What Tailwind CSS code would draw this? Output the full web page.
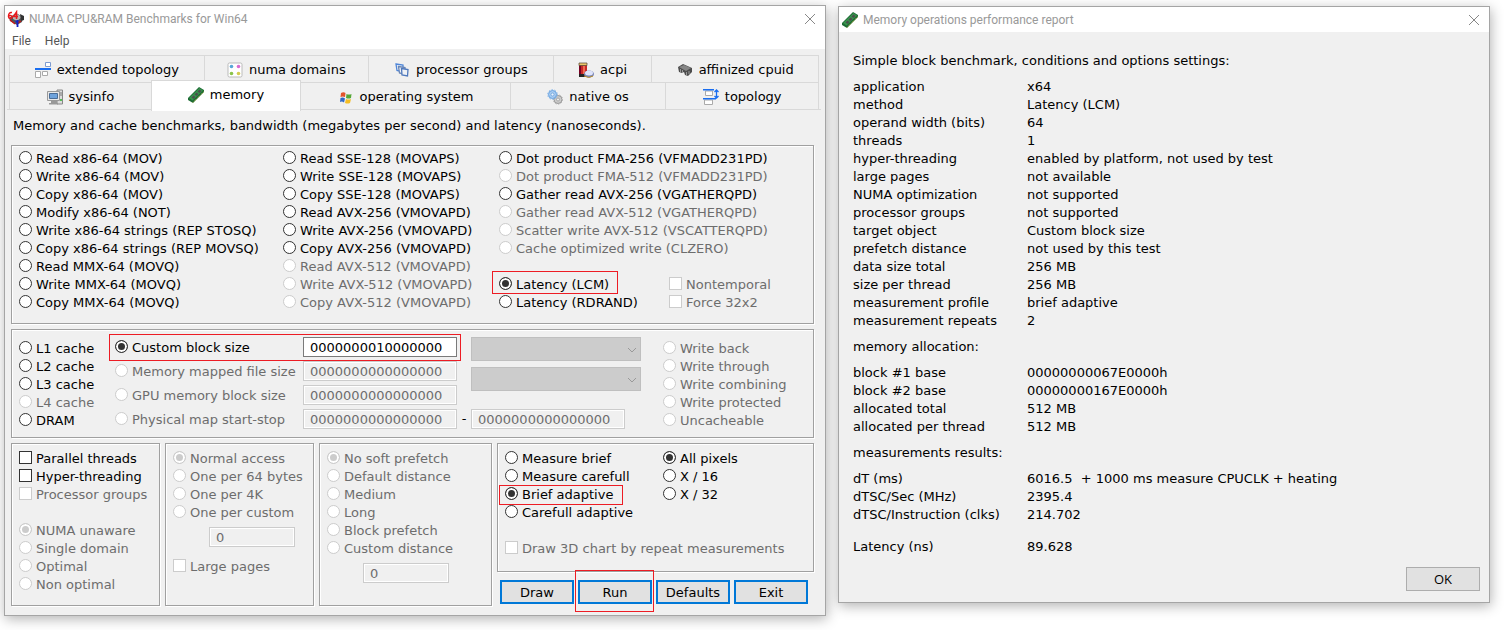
<!DOCTYPE html>
<html lang="en">
<head>
<meta charset="utf-8">
<title>NUMA CPU&amp;RAM Benchmarks for Win64</title>
<script src="https://cdn.jsdelivr.net/npm/@tailwindcss/browser@4"></script>
</head>
<body class="grid min-h-screen grid-cols-[minmax(0,822fr)_minmax(0,652fr)] items-start gap-3 bg-white pt-[5px] pr-3.5 pb-3.5 pl-1 font-['Verdana','DejaVu_Sans',sans-serif] text-[13px] leading-[18px] whitespace-nowrap text-black [&_label]:flex [&_label]:h-[18px] [&_label]:w-max [&_label]:items-start [&_label]:gap-1 [&_label]:leading-5 [&_label]:has-disabled:text-[#6d6d6d] [&_label>input]:mt-0.5 [&_[type=radio]]:size-[13px] [&_[type=radio]]:appearance-none [&_[type=radio]]:rounded-full [&_[type=radio]]:border [&_[type=radio]]:border-[#333] [&_[type=radio]]:bg-white [&_[type=radio]]:disabled:border-[#ccc] [&_[type=radio]]:checked:bg-[#333] [&_[type=radio]]:checked:shadow-[inset_0_0_0_2px_#fff] [&_[type=radio]]:checked:disabled:bg-[#ccc] [&_[type=checkbox]]:size-[13px] [&_[type=checkbox]]:appearance-none [&_[type=checkbox]]:border [&_[type=checkbox]]:border-[#333] [&_[type=checkbox]]:bg-white [&_[type=checkbox]]:disabled:border-[#ccc] [&_[type=text]]:h-5 [&_[type=text]]:border [&_[type=text]]:border-[#7a7a7a] [&_[type=text]]:bg-white [&_[type=text]]:px-1.5 [&_[type=text]]:disabled:border-[#ccc] [&_[type=text]]:disabled:bg-[#f0f0f0] [&_[type=text]]:disabled:text-[#6d6d6d] [&_[type=text]]:disabled:shadow-[inset_0_0_0_1px_#fff] [&_fieldset]:border [&_fieldset]:border-[#a0a0a0] [&_fieldset]:pl-[7px] [&_fieldset]:shadow-[1px_1px_0_#fff,inset_1px_1px_0_#fff]">

<main class="border border-[#a5a5a5] bg-[#f0f0f0] pb-[9px] shadow-[1px_3px_12px_rgba(0,0,0,0.3)]">
  <header class="bg-white font-['Segoe_UI',Roboto,'Open_Sans',sans-serif] text-xs">
    <div class="flex h-[25px] items-center gap-1 pl-0.5 text-[#999]">
      <svg class="size-[18px]" viewBox="0 0 18 18" aria-hidden="true"><path d="m2 8 7-5 7 4-1 5-5 3-7-4z" fill="#555"/><path d="m6 6 4-2 5 3-5 4-4-2z" fill="#b5b5b5"/><path d="m13 4 4 2v4l-3 1z" fill="#333"/><path d="M5 2.500C2.500 2 1.500 4 1.500 6.500S5 9 5 7 2 5 1.500 6.500M9.500 9V2L6.500 6.500H11" fill="none" stroke="#e8191c" stroke-width="1.500"/><path d="m3 10 5 4M11 13l3-2" stroke="#c11" stroke-width="1.200"/><path d="M10.500 10v7M8.500 11.500h3" stroke="#1420c8" stroke-width="1.800"/></svg>
      <h1>NUMA CPU&amp;RAM Benchmarks for Win64</h1>
      <button type="button" aria-label="Close" class="mr-[7px] ml-auto grid size-4 place-items-center"><svg class="size-3" viewBox="0 0 12 12" fill="none" stroke="#888"><path d="m1 1 10 10M11 1 1 11"/></svg></button>
    </div>
    <nav class="flex h-[18px] items-center gap-3.5 pt-0.5 pl-[7px] text-[#555]"><button type="button">File</button><button type="button">Help</button></nav>
  </header>

  <div class="pt-1.5 pr-1 pl-0.5">
    <div role="tablist" class="border-b border-[#d9d9d9] px-0.5">
      <div class="grid h-[27px] grid-cols-[195fr_165fr_185fr_99fr_166fr] divide-x divide-[#d9d9d9] border border-b-0 border-[#d9d9d9] *:flex *:items-center *:justify-center *:gap-1.5 *:pt-0.5">
        <button type="button" role="tab"><svg class="size-4" viewBox="0 0 16 16" fill="#fff" aria-hidden="true"><path d="M10.500.5h5v4h-5z" stroke="#7d9bd0"/><path d="M0 6h16v2H0z" fill="#1a6ef0"/><path d="M.5 9.500h5v6h-5zM7.500 9.500h5v4h-5z" stroke="#aaa"/></svg>extended topology</button>
        <button type="button" role="tab"><svg class="size-4" viewBox="0 0 16 16" aria-hidden="true"><rect x="1" y="1" width="14" height="14" rx="1.500" fill="#fff" stroke="#bbb"/><circle cx="4.500" cy="4.500" r="1.800" fill="#58a6d8"/><circle cx="11.500" cy="4.500" r="1.800" fill="#d96cd2"/><circle cx="4.500" cy="11.500" r="1.800" fill="#8bc34a"/><circle cx="11.500" cy="11.500" r="1.800" fill="#d4cc50"/></svg>numa domains</button>
        <button type="button" role="tab"><svg class="size-4" viewBox="0 0 16 16" fill="#eef1f6" stroke-width="1.300" aria-hidden="true"><path d="m2 2 7 1v7L3 8.500z" stroke="#4f86d8"/><path d="m4.500 4.500 6.500 1v7L5.500 11z" stroke="#6a86b4"/><path d="m7.500 6.500 6.500 1-.5 6.500-5.500-1z" stroke="#4f79bd"/></svg>processor groups</button>
        <button type="button" role="tab"><svg class="size-4" viewBox="0 0 16 16" aria-hidden="true"><path d="M1 1.500h8v13H1z" fill="#c62828"/><path d="M1 3h2v11H1z" fill="#702"/><path d="M5 4h2v9H5z" fill="#f26a50"/><path d="M1 1h8v2.500H1z" fill="#e9c66a" stroke="#543" stroke-width=".7"/><path d="M1 12h7v3H1z" fill="#222"/><ellipse cx="11" cy="12" rx="5" ry="3.600" fill="#7a86b8"/><ellipse cx="11" cy="11" rx="4" ry="2.500" fill="#dfe4fa"/><path d="M6 14q5 3 9 0" stroke="#b98c2a" fill="none"/></svg>acpi</button>
        <button type="button" role="tab"><svg class="size-4" viewBox="0 0 16 16" aria-hidden="true"><path d="m1 5 5-3 9 4v4l-4 4-3-1-1-3-2 1-3-1z" fill="#4d4d4d"/><path d="m2 5 5-2 7 3-5 3z" fill="#858585"/><path d="M3.500 7v3M5.500 8v3M9.500 10v3M12 9v3" stroke="#999"/></svg>affinized cpuid</button>
      </div>
      <div class="grid h-[27px] grid-cols-[141fr_151fr_209fr_157fr_152fr] border-x border-t border-[#d9d9d9] *:flex *:items-center *:justify-center *:gap-1.5 *:pt-0.5">
        <button type="button" role="tab"><svg class="size-4" viewBox="0 0 16 16" aria-hidden="true"><path d="M10 1h5.500v14H10z" fill="#ddd" stroke="#888"/><path d="M12 4h3M12 6h3" stroke="#777"/><path d="M13 10h2v2h-2z" fill="#5b5"/><path d="M.5 2.500h12v9H.5z" fill="#e8e8e8" stroke="#999"/><path d="M2.500 4.500h8v5h-8z" fill="#6fa3dc" stroke="#4a6d98"/><path d="M4 12h6v2H4zM2 14h9v1.500H2z" fill="#999"/></svg>sysinfo</button>
        <button type="button" role="tab" aria-selected="true" class="relative -mt-[3px] -mb-[2px] border border-b-0 border-[#d9d9d9] bg-white pb-1"><svg class="size-4" viewBox="0 0 16 16" aria-hidden="true"><path d="M0 11 11 0l5 3v2L5 16l-5-3z" fill="#1d6b35"/><path d="M1 11 11.500 1 15 3.500 4.500 13.500z" fill="#37934c"/><path d="m3.500 10.500 2-2 2 1.500-2 2zM6.500 7.500l2-2 2 1.500-2 2zM9.500 4.500l2-2 2 1.500-2 2z" fill="#4c504c"/><path d="M5 15.500 15.500 5" stroke="#d4c04a" stroke-dasharray="1 1"/></svg>memory</button>
        <button type="button" role="tab"><svg class="size-4" viewBox="0 0 16 16" aria-hidden="true"><path d="M3 4q2.500-1.500 4.500 0L7 8Q4.500 7 2.500 8z" fill="#e3542c"/><path d="M8.500 5q2.500 1 5 0L13 9q-2.500 1-5 0z" fill="#56a837"/><path d="M2.500 9Q5 8 7 9.500L6 13.500Q4 12 2 13z" fill="#3169c6"/><path d="M8 10q2.500 1 5 0l-1 4q-2.500 1-5 0z" fill="#f4bd25"/></svg>operating system</button>
        <button type="button" role="tab" class="border-x border-[#d9d9d9]"><svg class="size-4" viewBox="0 0 16 16" aria-hidden="true"><circle cx="11" cy="10.500" r="4" fill="#ccc" stroke="#999" stroke-width="1"/><circle cx="11" cy="10.500" r="4.600" fill="none" stroke="#aaa" stroke-dasharray="1.400 1.400"/><circle cx="11" cy="10.500" r="1.500" fill="#eee" stroke="#888" stroke-width=".6"/><circle cx="5.500" cy="5.500" r="4" fill="#a7cbf2" stroke="#6ba4e0" stroke-width="1"/><circle cx="5.500" cy="5.500" r="4.800" fill="none" stroke="#7fb2e8" stroke-dasharray="1.500 1.500"/><circle cx="5.500" cy="5.500" r="1.500" fill="#eaf4ff" stroke="#5590cf" stroke-width=".6"/></svg>native os</button>
        <button type="button" role="tab"><svg class="size-4" viewBox="0 0 16 16" fill="#fff" aria-hidden="true"><path d="M2.500 2h7v4.500h-7zM1.500 11h8v4.500h-8z" stroke="#aaa"/><path d="M0 0h11v1.500H0zM0 9h13v1.500H0z" fill="#1a6ef0"/><path d="M13.500 1v8M11.500 3l2-2 2 2M11.500 7l2 2 2-2" stroke="#1a6ef0" stroke-width="1.300" fill="none"/></svg>topology</button>
      </div>
    </div>
    <p class="flex h-[35px] items-center pb-1 pl-1.5">Memory and cache benchmarks, bandwidth (megabytes per second) and latency (nanoseconds).</p>
  </div>

  <div class="grid gap-[5px] pr-[11px] pl-1.5">
    <fieldset class="grid grid-cols-[minmax(0,264fr)_minmax(0,216fr)_minmax(0,314fr)] pt-[3px] pb-3" aria-label="Operation">
      <div>
        <label><input type="radio" name="op">Read x86-64 (MOV)</label>
        <label><input type="radio" name="op">Write x86-64 (MOV)</label>
        <label><input type="radio" name="op">Copy x86-64 (MOV)</label>
        <label><input type="radio" name="op">Modify x86-64 (NOT)</label>
        <label><input type="radio" name="op">Write x86-64 strings (REP STOSQ)</label>
        <label><input type="radio" name="op">Copy x86-64 strings (REP MOVSQ)</label>
        <label><input type="radio" name="op">Read MMX-64 (MOVQ)</label>
        <label><input type="radio" name="op">Write MMX-64 (MOVQ)</label>
        <label><input type="radio" name="op">Copy MMX-64 (MOVQ)</label>
      </div>
      <div>
        <label><input type="radio" name="op">Read SSE-128 (MOVAPS)</label>
        <label><input type="radio" name="op">Write SSE-128 (MOVAPS)</label>
        <label><input type="radio" name="op">Copy SSE-128 (MOVAPS)</label>
        <label><input type="radio" name="op">Read AVX-256 (VMOVAPD)</label>
        <label><input type="radio" name="op">Write AVX-256 (VMOVAPD)</label>
        <label><input type="radio" name="op">Copy AVX-256 (VMOVAPD)</label>
        <label><input type="radio" name="op" disabled>Read AVX-512 (VMOVAPD)</label>
        <label><input type="radio" name="op" disabled>Write AVX-512 (VMOVAPD)</label>
        <label><input type="radio" name="op" disabled>Copy AVX-512 (VMOVAPD)</label>
      </div>
      <div>
        <label><input type="radio" name="op">Dot product FMA-256 (VFMADD231PD)</label>
        <label><input type="radio" name="op" disabled>Dot product FMA-512 (VFMADD231PD)</label>
        <label><input type="radio" name="op">Gather read AVX-256 (VGATHERQPD)</label>
        <label><input type="radio" name="op" disabled>Gather read AVX-512 (VGATHERQPD)</label>
        <label><input type="radio" name="op" disabled>Scatter write AVX-512 (VSCATTERQPD)</label>
        <label><input type="radio" name="op" disabled>Cache optimized write (CLZERO)</label>
        <div class="mt-[18px] grid grid-cols-[minmax(0,170fr)_minmax(0,144fr)]">
          <label class="relative"><input type="radio" name="op" checked>Latency (LCM)<span class="absolute -top-1 -right-[9px] -left-[7px] h-[23px] border border-[#ed1c24]"></span></label>
          <label><input type="checkbox" disabled>Nontemporal</label>
          <label><input type="radio" name="op">Latency (RDRAND)</label>
          <label><input type="checkbox" disabled>Force 32x2</label>
        </div>
      </div>
    </fieldset>

    <fieldset class="grid grid-cols-[minmax(0,96fr)_minmax(0,356fr)_minmax(0,192fr)_minmax(0,150fr)] pt-[7px] pb-2" aria-label="Object">
      <div class="pt-0.5">
        <label><input type="radio" name="object">L1 cache</label>
        <label><input type="radio" name="object">L2 cache</label>
        <label><input type="radio" name="object">L3 cache</label>
        <label><input type="radio" name="object" disabled>L4 cache</label>
        <label><input type="radio" name="object" >DRAM</label>
      </div>
      <div class="relative grid grid-cols-[minmax(0,188fr)_minmax(0,154fr)_14px] items-center gap-y-1">
        <label><input type="radio" name="object" checked>Custom block size</label>
        <input type="text" aria-label="Custom block size" value="0000000010000000"><span></span>
        <label><input type="radio" name="object" disabled>Memory mapped file size</label>
        <input type="text" aria-label="Memory mapped file size" value="0000000000000000" disabled><span></span>
        <label><input type="radio" name="object" disabled>GPU memory block size</label>
        <input type="text" aria-label="GPU memory block size" value="0000000000000000" disabled><span></span>
        <label><input type="radio" name="object" disabled>Physical map start-stop</label>
        <input type="text" aria-label="Physical map start" value="0000000000000000" disabled><span class="text-center">-</span>
        <span class="pointer-events-none absolute -top-[3px] right-2.5 -left-1.5 h-[27px] border border-[#ed1c24]"></span>
      </div>
      <div class="flex flex-col gap-1.5 pr-[22px]">
        <div class="relative"><select disabled aria-label="Mapped file" class="block h-6 w-full appearance-none border border-[#bfbfbf] bg-[#ccc]"></select><svg class="pointer-events-none absolute top-2 right-1 size-2.5" viewBox="0 0 10 10" fill="none" stroke="#999"><path d="m1 3 4 4 4-4"/></svg></div>
        <div class="relative"><select disabled aria-label="GPU device" class="block h-6 w-full appearance-none border border-[#bfbfbf] bg-[#ccc]"></select><svg class="pointer-events-none absolute top-2 right-1 size-2.5" viewBox="0 0 10 10" fill="none" stroke="#999"><path d="m1 3 4 4 4-4"/></svg></div>
        <input type="text" aria-label="Physical map stop" value="0000000000000000" disabled class="mt-3 mr-4">
      </div>
      <div class="pt-0.5">
        <label><input type="radio" name="caching" disabled>Write back</label>
        <label><input type="radio" name="caching" disabled>Write through</label>
        <label><input type="radio" name="caching" disabled>Write combining</label>
        <label><input type="radio" name="caching" disabled>Write protected</label>
        <label><input type="radio" name="caching" disabled>Uncacheable</label>
      </div>
    </fieldset>

    <div class="grid grid-cols-[minmax(0,149fr)_minmax(0,149fr)_minmax(0,173fr)_minmax(0,317fr)] gap-[5px]">
      <fieldset class="pt-[5px]" aria-label="Threads">
        <label><input type="checkbox">Parallel threads</label>
        <label><input type="checkbox">Hyper-threading</label>
        <label><input type="checkbox" disabled>Processor groups</label>
        <div class="mt-[18px]">
          <label><input type="radio" name="numa" disabled checked>NUMA unaware</label>
          <label><input type="radio" name="numa" disabled>Single domain</label>
          <label><input type="radio" name="numa" disabled>Optimal</label>
          <label><input type="radio" name="numa" disabled>Non optimal</label>
        </div>
      </fieldset>
      <fieldset class="pt-[5px]" aria-label="Access">
        <label><input type="radio" name="access" disabled checked>Normal access</label>
        <label><input type="radio" name="access" disabled>One per 64 bytes</label>
        <label><input type="radio" name="access" disabled>One per 4K</label>
        <label><input type="radio" name="access" disabled>One per custom</label>
        <input type="text" aria-label="Custom access step" value="0" disabled class="mt-1.5 mb-2.5 ml-9 block w-[86px]">
        <label><input type="checkbox" disabled>Large pages</label>
      </fieldset>
      <fieldset class="pt-[5px]" aria-label="Prefetch">
        <label><input type="radio" name="prefetch" disabled checked>No soft prefetch</label>
        <label><input type="radio" name="prefetch" disabled>Default distance</label>
        <label><input type="radio" name="prefetch" disabled>Medium</label>
        <label><input type="radio" name="prefetch" disabled>Long</label>
        <label><input type="radio" name="prefetch" disabled>Block prefetch</label>
        <label><input type="radio" name="prefetch" disabled>Custom distance</label>
        <input type="text" aria-label="Custom prefetch distance" value="0" disabled class="mt-1.5 ml-9 block w-[86px]">
      </fieldset>
      <div>
        <fieldset class="pt-[5px] pb-3.5" aria-label="Measurement">
          <div class="grid grid-cols-[minmax(0,158fr)_minmax(0,150fr)]">
            <div>
              <label><input type="radio" name="profile">Measure brief</label>
              <label><input type="radio" name="profile">Measure carefull</label>
              <label class="relative"><input type="radio" name="profile" checked>Brief adaptive<span class="absolute top-0 -right-2.5 -left-1.5 h-5 border border-[#ed1c24]"></span></label>
              <label><input type="radio" name="profile">Carefull adaptive</label>
            </div>
            <div>
              <label><input type="radio" name="pixels" checked>All pixels</label>
              <label><input type="radio" name="pixels">X / 16</label>
              <label><input type="radio" name="pixels">X / 32</label>
            </div>
          </div>
          <div class="mt-[18px]"><label><input type="checkbox" disabled>Draw 3D chart by repeat measurements</label></div>
        </fieldset>
        <div class="mt-2 mb-0.5 grid grid-cols-4 gap-1 pr-1.5 pl-[3px] *:h-6 *:border-2 *:border-[#0078d7] *:bg-[#e1e1e1] *:pt-0.5 *:leading-[18px]">
          <button type="button">Draw</button>
          <button type="button" class="relative">Run<span class="absolute -top-3 -right-1 -bottom-2.5 -left-[5px] border border-[#ed1c24]"></span></button>
          <button type="button">Defaults</button>
          <button type="button">Exit</button>
        </div>
      </div>
    </div>
  </div>
</main>

<section class="mt-px border border-[#a5a5a5] bg-[#f0f0f0] pb-[11px] shadow-[1px_3px_12px_rgba(0,0,0,0.3)]">
  <header class="flex h-[25px] items-center gap-[5px] bg-white pl-[3px] font-['Segoe_UI',Roboto,'Open_Sans',sans-serif] text-xs text-[#999]">
    <svg class="size-4" viewBox="0 0 16 16" aria-hidden="true"><path d="M0 11 11 0l5 3v2L5 16l-5-3z" fill="#1d6b35"/><path d="M1 11 11.500 1 15 3.500 4.500 13.500z" fill="#37934c"/><path d="m3.500 10.500 2-2 2 1.500-2 2zM6.500 7.500l2-2 2 1.500-2 2zM9.500 4.500l2-2 2 1.500-2 2z" fill="#4c504c"/><path d="M5 15.500 15.500 5" stroke="#d4c04a" stroke-dasharray="1 1"/></svg>
    <h2>Memory operations performance report</h2>
    <button type="button" aria-label="Close" class="mr-[7px] ml-auto grid size-4 place-items-center"><svg class="size-3" viewBox="0 0 12 12" fill="none" stroke="#888"><path d="m1 1 10 10M11 1 1 11"/></svg></button>
  </header>
  <div class="flex flex-col gap-2 px-3.5 pt-5 [&_td]:p-0 [&_th]:w-[174px] [&_th]:p-0 [&_th]:text-left [&_th]:font-normal [&_tr]:h-[18px]">
    <p>Simple block benchmark, conditions and options settings:</p>
    <table><tbody>
      <tr><th scope="row">application</th><td>x64</td></tr>
      <tr><th scope="row">method</th><td>Latency (LCM)</td></tr>
      <tr><th scope="row">operand width (bits)</th><td>64</td></tr>
      <tr><th scope="row">threads</th><td>1</td></tr>
      <tr><th scope="row">hyper-threading</th><td>enabled by platform, not used by test</td></tr>
      <tr><th scope="row">large pages</th><td>not available</td></tr>
      <tr><th scope="row">NUMA optimization</th><td>not supported</td></tr>
      <tr><th scope="row">processor groups</th><td>not supported</td></tr>
      <tr><th scope="row">target object</th><td>Custom block size</td></tr>
      <tr><th scope="row">prefetch distance</th><td>not used by this test</td></tr>
      <tr><th scope="row">data size total</th><td>256 MB</td></tr>
      <tr><th scope="row">size per thread</th><td>256 MB</td></tr>
      <tr><th scope="row">measurement profile</th><td>brief adaptive</td></tr>
      <tr><th scope="row">measurement repeats</th><td>2</td></tr>
    </tbody></table>
    <p>memory allocation:</p>
    <table><tbody>
      <tr><th scope="row">block #1 base</th><td>00000000067E0000h</td></tr>
      <tr><th scope="row">block #2 base</th><td>00000000167E0000h</td></tr>
      <tr><th scope="row">allocated total</th><td>512 MB</td></tr>
      <tr><th scope="row">allocated per thread</th><td>512 MB</td></tr>
    </tbody></table>
    <p>measurements results:</p>
    <table><tbody>
      <tr><th scope="row">dT (ms)</th><td>6016.5 &nbsp;+ 1000 ms measure CPUCLK + heating</td></tr>
      <tr><th scope="row">dTSC/Sec (MHz)</th><td>2395.4</td></tr>
      <tr><th scope="row">dTSC/Instruction (clks)</th><td>214.702</td></tr>
    </tbody></table>
    <table class="mt-1.5"><tbody>
      <tr><th scope="row">Latency (ns)</th><td>89.628</td></tr>
    </tbody></table>
  </div>
  <div class="mt-[11px] flex justify-end pr-[9px]"><button type="button" class="h-6 w-[74px] border border-[#adadad] bg-[#e1e1e1] font-['Segoe_UI','Open_Sans',sans-serif] text-[13px]">OK</button></div>
</section>
</body>
</html>
